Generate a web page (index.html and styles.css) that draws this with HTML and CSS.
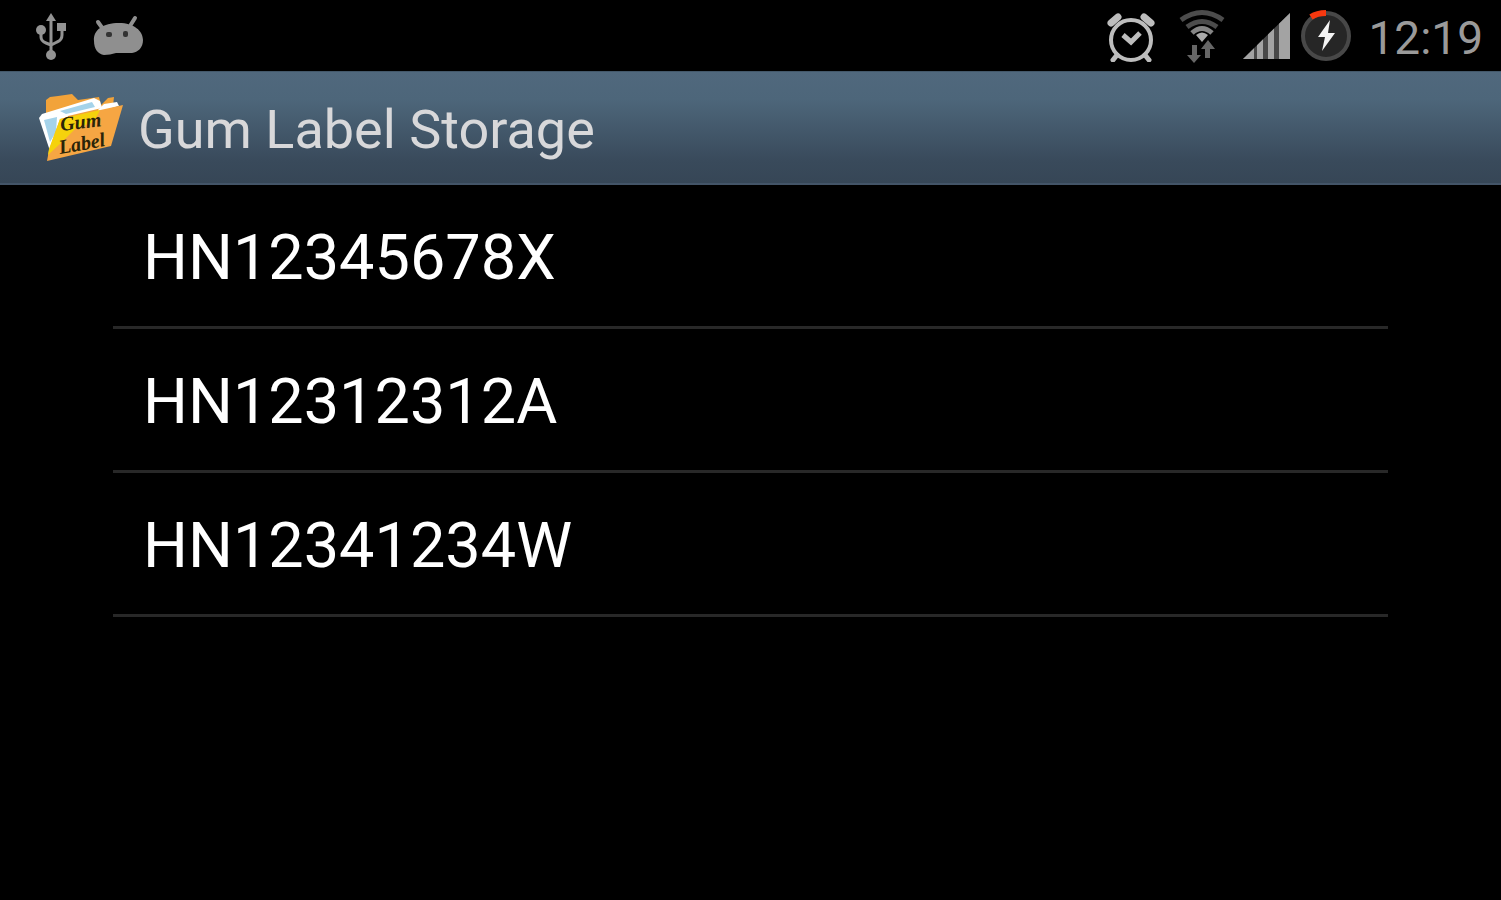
FILE: index.html
```html
<!DOCTYPE html>
<html lang="en">

<head>
    <meta charset="UTF-8">
    <meta name="viewport" content="width=device-width, initial-scale=1.0">
    <title>Gum Label Storage</title>
    <link rel="stylesheet" href="styles.css">
</head>

<body>
    <div class="status-bar">
        <div class="status-left">
            <!-- USB -->
            <svg class="icon-usb" width="32" height="52" viewBox="0 0 32 52" fill="#939393" stroke="#939393">
                <path d="M16 8V44M6 20V27Q6 31 11 33L16 35L22 32Q27 30 27 25V17" fill="none" stroke-width="3" />
                <path d="M16 3L21 11H11Z" stroke="none" />
                <circle cx="6" cy="20" r="5" stroke="none" />
                <path d="M22 13H31V21H22Z" stroke="none" />
                <circle cx="16" cy="45" r="5" stroke="none" />
            </svg>
            <!-- Android debugging -->
            <svg width="52" height="44" viewBox="0 0 52 44">
                <path d="M6 8L11 15M43 4L38 12" stroke="#8f8f8f" stroke-width="4" stroke-linecap="round" />
                <path d="M2 27C1 16 11 9 27 9C42 9 51 17 51 26C51 34 46 38 40 39H24C20 40 16 41 12 41C6 40 2 35 2 27Z" fill="#8f8f8f" />
                <rect x="14" y="18" width="6" height="5" rx="2" fill="#333" />
                <rect x="31" y="17" width="5" height="6" rx="2" fill="#333" />
            </svg>
        </div>

        <div class="status-right">
            <!-- Alarm -->
            <svg class="icon-alarm" width="48" height="52" viewBox="0 0 48 52" fill="none" stroke="#bdbdbd" stroke-linecap="round">
                <path d="M4 13L11 7M44 13L37 7" stroke-width="7" />
                <path d="M10 45L6 50M38 45L42 50" stroke-width="5" />
                <circle cx="24" cy="30" r="20" stroke-width="4" />
                <path d="M16 25L24 32L33 23" stroke-width="5" stroke-linecap="butt" />
            </svg>
            <!-- Wi-Fi -->
            <svg class="icon-wifi" width="46" height="54" viewBox="0 0 46 54" fill="none">
                <path d="M2 11Q23 -4 44 11" stroke="#4c4c4c" stroke-width="5" />
                <path d="M8 18Q23 7 38 18" stroke="#4c4c4c" stroke-width="5" />
                <path d="M13 24Q23 15 33 24" stroke="#858585" stroke-width="5" />
                <path d="M17 26Q23 21 29 26L23 33Z" fill="#aaa" />
                <path d="M13 36H18V46H22L15 54L8 46H13Z" fill="#666" />
                <path d="M26 49H31V40H36L29 31L22 40H26Z" fill="#666" />
            </svg>
            <!-- Signal strength -->
            <svg class="icon-signal" width="48" height="48" viewBox="0 0 48 48">
                <defs>
                    <clipPath id="wedge">
                        <path d="M1 47L48 1V47Z" />
                    </clipPath>
                </defs>
                <g clip-path="url(#wedge)">
                    <path d="M0 0H48V48H0Z" fill="#484848" />
                    <path d="M0 0H12V48H0ZM15 0H21V48H15ZM26 0H32V48H26ZM37 0H48V48H37Z" fill="#a3a3a3" />
                </g>
            </svg>
            <!-- Battery, charging -->
            <svg class="icon-battery" width="52" height="54" viewBox="0 0 52 54">
                <circle cx="26" cy="27" r="23" fill="#262626" stroke="#484848" stroke-width="4" />
                <path d="M11 8Q17 4 26 4" fill="none" stroke="#f7380f" stroke-width="6" />
                <path d="M30 11L18 28H25L22 42L35 24H28Z" fill="#f4f4f4" />
            </svg>
            <span class="clock">12:19</span>
        </div>
    </div>

    <div class="title-bar">
        <svg class="app-icon" width="86" height="72" viewBox="0 0 86 72">
            <path d="M8 8L12 5L20 4L34 2L40 8L61 5L63 13L70 6L76 5L75 14L18 42L8 36Z" fill="#f2a33a" />
            <path d="M1 26L4 22L56 6L62 9L64 16L30 24L13 62Z" fill="#fff" />
            <path d="M6 28L19 25L18 40L12 50ZM22 19L54 10L57 15L28 22Z" fill="#a5d3ea" />
            <path d="M60 18L66 12L79 10L81 14L60 20Z" fill="#fff" />
            <path d="M22 27L85 13L73 54L9 69L11 58Z" fill="#f6a643" />
            <path d="M22 27L62 18L56 30L38 36L24 50L10 63L11 57Z" fill="#f5d20c" />
            <text class="icon-text" x="23" y="39" transform="rotate(-7 23 39)">Gum</text>
            <text class="icon-text" x="22" y="62" transform="rotate(-10 22 62)">Label</text>
        </svg>
        <h1>Gum Label Storage</h1>
    </div>

    <ul class="label-list">
        <li>HN12345678X</li>
        <li>HN12312312A</li>
        <li>HN12341234W</li>
    </ul>
</body>

</html>
```
FILE: styles.css
```css
body {
    margin: 0;
    background-color: #000;
    color: #fff;
    font-family: Roboto, "Liberation Sans", sans-serif;
}

svg {
    display: block;
    flex-shrink: 0;
}

/* Status bar */
.status-bar {
    display: flex;
    justify-content: space-between;
    height: 71px;
    padding: 0 18px 0 35px;
}

.status-left,
.status-right {
    display: flex;
    align-items: center;
}

.status-left {
    gap: 25px;
}

.icon-alarm {
    margin-right: 24px;
}

.icon-wifi {
    margin-right: 17px;
}

.icon-signal {
    margin-right: 10px;
}

.icon-battery {
    margin-right: 16px;
}

.clock {
    padding-top: 4px;
    color: #9a9a9a;
    font-size: 46px;
    line-height: 56px;
}

/* Title bar */
.title-bar {
    display: flex;
    align-items: center;
    gap: 14px;
    box-sizing: border-box;
    height: 114px;
    padding: 0 38px;
    background: linear-gradient(#50687d, #4d667a 25%, #394a5b 80%, #364656);
    border-top: 1px solid #43586a;
    border-bottom: 2px solid #435467;
}

.title-bar h1 {
    margin: 0;
    padding-top: 4px;
    color: #d8d8da;
    font-size: 54px;
    font-weight: 400;
    line-height: 64px;
}

.icon-text {
    fill: #2b2408;
    font-family: "Liberation Serif", serif;
    font-size: 20px;
    font-style: italic;
    font-weight: 700;
}

/* Stored labels */
.label-list {
    margin: 0 113px;
    padding: 0;
    list-style: none;
}

.label-list li {
    padding: 4px 26px 0 30px;
    border-bottom: 3px solid #282828;
    font-size: 63px;
    line-height: 137px;
}
```
